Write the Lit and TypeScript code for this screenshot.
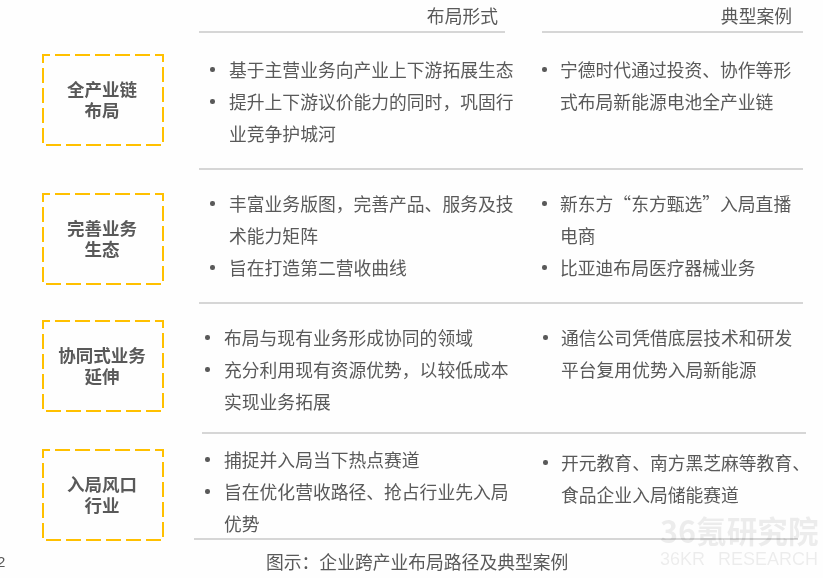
import { LitElement, html, css } from "lit";
import { customElement } from "lit/decorators.js";

type Item = string[];
interface Row { cls: string; label: string[]; forms: Item[]; cases: Item[]; }

const ROWS: Row[] = [
  { cls: "r1", label: ["全产业链", "布局"],
    forms: [["基于主营业务向产业上下游拓展生态"], ["提升上下游议价能力的同时，巩固行", "业竞争护城河"]],
    cases: [["宁德时代通过投资、协作等形", "式布局新能源电池全产业链"]] },
  { cls: "r2", label: ["完善业务", "生态"],
    forms: [["丰富业务版图，完善产品、服务及技", "术能力矩阵"], ["旨在打造第二营收曲线"]],
    cases: [["新东方“东方甄选”入局直播", "电商"], ["比亚迪布局医疗器械业务"]] },
  { cls: "r3", label: ["协同式业务", "延伸"],
    forms: [["布局与现有业务形成协同的领域"], ["充分利用现有资源优势，以较低成本", "实现业务拓展"]],
    cases: [["通信公司凭借底层技术和研发", "平台复用优势入局新能源"]] },
  { cls: "r4", label: ["入局风口", "行业"],
    forms: [["捕捉并入局当下热点赛道"], ["旨在优化营收路径、抢占行业先入局", "优势"]],
    cases: [["开元教育、南方黑芝麻等教育、", "食品企业入局储能赛道"]] },
];

@customElement("app-root")
export class AppRoot extends LitElement {
  static styles = css`
    :host {
      display: block; position: relative; width: 823px; height: 578px; overflow: hidden;
      background: #fefefe; color: #595959;
      font-family: "Noto Sans CJK SC", "Liberation Sans", sans-serif;
      font-size: 17.8px; line-height: 32px;
      filter: blur(0.3px);
    }
    .head { display: flex; height: 31px; margin-left: 199px; }
    .h-a, .h-b { border-bottom: 2px solid #d6d6d6; text-align: right; line-height: 30px; height: 33px; box-sizing: border-box; }
    .h-a { width: 306px; padding-right: 7px; margin-right: 37px; }
    .h-b { width: 261px; padding-right: 11px; }
    .row { display: flex; }
    .r1 { height: 136px; padding-top: 1px; }
    .r2 { height: 133px; }
    .r3 { height: 129px; }
    .r4 { height: 105px; }
    .cell { width: 199px; flex: none; padding-left: 42px; box-sizing: border-box; }
    .box {
      position: relative; width: 122px; height: 92px; display: flex; flex-direction: column;
      align-items: center; justify-content: center; font-weight: 700; line-height: 21px; font-size: 17.5px;
      padding: 0 2px 2px 0; box-sizing: border-box;
    }
    .box svg { position: absolute; inset: 0; }
    .r1 .box { margin-top: 22px; }
    .r2 .box { margin-top: 24px; }
    .r3 .box { margin-top: 17px; }
    .r4 .box { margin-top: 16px; }
    .forms { width: 343px; flex: none; }
    .cases { width: 261px; flex: none; }
    .r1 .forms, .r1 .cases { padding-top: 21px; }
    .r2 .forms, .r2 .cases { padding-top: 18px; }
    .r3 .forms, .r3 .cases { padding-top: 18px; }
    .r4 .forms { padding-top: 10px; }
    .r4 .cases { padding-top: 13px; }
    .r3 .forms, .r4 .forms { margin-left: -5px; }
    .r3 .cases, .r4 .cases { margin-left: 6px; }
    .item { display: flex; white-space: nowrap; }
    .dot { width: 30px; flex: none; display: flex; padding: 14px 0 0 11px; box-sizing: border-box; height: 32px; }
    .dot::before { content: ""; width: 4.5px; height: 4.5px; border-radius: 50%; background: #595959; }
    .cases .dot { width: 18px; padding-left: 0; }
    .line { display: block; }
    .rule { width: 604px; height: 2px; margin-bottom: -1px; background: #d6d6d6; margin-left: 199px; }
    .shift { margin-left: 202px; }
    .bottom { margin-left: 194px; }
    .caption { margin: 6px 0 0 266px; line-height: 32px; white-space: nowrap; }
    .page { position: absolute; left: -3px; top: 552px; font-family: "Liberation Sans", sans-serif; font-size: 15px; line-height: 20px; }
    .mark {
      position: absolute; left: 660px; top: 512px; width: 160px; color: rgba(0, 0, 0, 0.07); white-space: nowrap;
    }
    .mark-a { font-weight: 700; font-size: 30.6px; line-height: 36px; }
    .mark-b { font-family: "Liberation Sans", sans-serif; font-size: 18px; line-height: 22px; word-spacing: 8px; }
  `;

  private list(items: Item[], cls: string) {
    return html`<div class=${cls}>
      ${items.map((lines) => html`<div class="item"><span class="dot"></span><div>
        ${lines.map((l) => html`<span class="line">${l}</span>`)}
      </div></div>`)}
    </div>`;
  }

  render() {
    return html`
      <div class="head"><div class="h-a">布局形式</div><div class="h-b">典型案例</div></div>
      ${ROWS.map((r, i) => html`
        <div class="row ${r.cls}">
          <div class="cell"><div class="box">
            <svg width="122" height="92" fill="none">
              <rect x="1" y="1" width="120" height="90" stroke="#ffc000" stroke-width="2" stroke-dasharray="15 5" stroke-dashoffset="8"></rect>
            </svg>
            ${r.label.map((l) => html`<span>${l}</span>`)}
          </div></div>
          ${this.list(r.forms, "forms")}
          ${this.list(r.cases, "cases")}
        </div>
        ${i < 3 ? html`<div class="rule ${i === 2 ? "shift" : ""}"></div>` : ""}
      `)}
      <div class="rule bottom"></div>
      <div class="caption">图示：企业跨产业布局路径及典型案例</div>
      <div class="page">2</div>
      <div class="mark"><div class="mark-a">36氪研究院</div><div class="mark-b">36KR RESEARCH</div></div>
    `;
  }
}
